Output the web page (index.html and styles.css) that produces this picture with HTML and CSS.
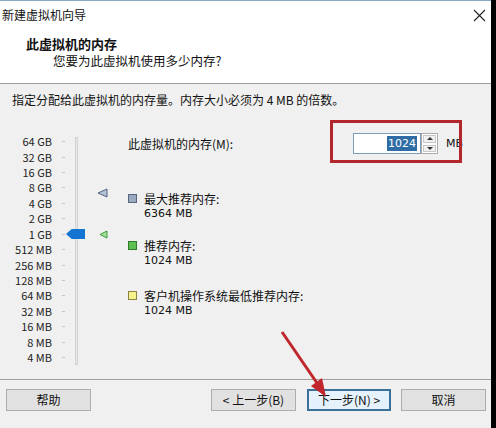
FILE: index.html
```html
<!DOCTYPE html>
<html lang="zh-CN">
<head>
	<meta charset="utf-8">
	<title>新建虚拟机向导</title>
	<link rel="stylesheet" href="styles.css">
</head>
<body>
	<div class="window">
		<div class="titlebar">
			<span>新建虚拟机向导</span>
			<svg class="close" width="13" height="13" viewBox="0 0 13 13"><path d="M1 1 L12 12 M12 1 L1 12" stroke="#222" stroke-width="1.1" fill="none"/></svg>
		</div>

		<div class="header">
			<h1>此虚拟机的内存</h1>
			<p>您要为此虚拟机使用多少内存?</p>
		</div>

		<div class="content">
			<p class="intro">指定分配给此虚拟机的内存量。内存大小必须为 4 MB 的倍数。</p>

			<div class="main">
				<!-- memory slider, log scale -->
				<div class="scale">
					<ul class="labels">
						<li><span>64 GB</span></li>
						<li><span>32 GB</span></li>
						<li><span>16 GB</span></li>
						<li><span>8 GB</span></li>
						<li><span>4 GB</span></li>
						<li><span>2 GB</span></li>
						<li><span>1 GB</span></li>
						<li><span>512 MB</span></li>
						<li><span>256 MB</span></li>
						<li><span>128 MB</span></li>
						<li><span>64 MB</span></li>
						<li><span>32 MB</span></li>
						<li><span>16 MB</span></li>
						<li><span>8 MB</span></li>
						<li><span>4 MB</span></li>
					</ul>
					<div class="track"></div>
					<div class="thumb"></div>
					<svg class="mark mark-max" width="11" height="10" viewBox="0 0 11 10"><path d="M1 5 L10 1 L10 9 Z" fill="#b4c2d4" stroke="#4f6384" stroke-width="1"/></svg>
					<svg class="mark mark-rec" width="9" height="9" viewBox="0 0 9 9"><path d="M1 4.5 L8 1 L8 8 Z" fill="#a6e09a" stroke="#3a9a35" stroke-width="1"/></svg>
				</div>

				<div class="details">
					<div class="mem-row">
						<label>此虚拟机的内存(M):</label>
						<div class="spin-input"><span class="sel">1024</span></div>
						<div class="spinner">
							<span class="up"></span>
							<span class="down"></span>
						</div>
						<span class="unit">MB</span>
					</div>

					<div class="legend legend-max">
						<i class="swatch"></i>
						<div class="legend-text">
							<span>最大推荐内存:</span>
							<span class="size">6364 MB</span>
						</div>
					</div>
					<div class="legend legend-rec">
						<i class="swatch"></i>
						<div class="legend-text">
							<span>推荐内存:</span>
							<span class="size">1024 MB</span>
						</div>
					</div>
					<div class="legend legend-min">
						<i class="swatch"></i>
						<div class="legend-text">
							<span>客户机操作系统最低推荐内存:</span>
							<span class="size">1024 MB</span>
						</div>
					</div>
				</div>
			</div>
		</div>

		<div class="footer">
			<button class="btn">帮助</button>
			<span class="spacer"></span>
			<button class="btn">&lt; 上一步(B)</button>
			<button class="btn btn-default">下一步(N) &gt;</button>
			<button class="btn">取消</button>
		</div>

		<!-- annotation drawn over the screenshot -->
		<div class="callout"></div>
		<svg class="arrow" width="491" height="428" viewBox="0 0 491 428">
			<path d="M282 332 L317 383" stroke="#c0262b" stroke-width="3" fill="none"/>
			<path d="M326 397 L311 386 L322 378 Z" fill="#c0262b"/>
		</svg>
	</div>
</body>
</html>
```

FILE: styles.css
```css
html, body {
	margin: 0;
	padding: 0;
}

body {
	background-color: #000;
	font-family: "Noto Sans CJK SC", "Liberation Sans", sans-serif;
	font-size: 12px;
	color: #111;
}

.window {
	position: relative;
	width: 491px;
	height: 428px;
	background-color: #f0f0f0;
	display: flex;
	flex-direction: column;
	overflow: hidden;
}

.titlebar {
	height: 27px;
	border-top: 1px solid #8aa9c4;
	background-color: #fff;
	display: flex;
	align-items: center;
	justify-content: space-between;
	padding: 0 5px 0 2px;
	font-size: 12px;
	line-height: 16px;
}

.close {
	margin-top: 1px;
}

.header {
	height: 55px;
	background-color: #fff;
	border-bottom: 1px solid #a0a0a0;
	padding-left: 26px;
}

.header h1 {
	margin: 0;
	padding-top: 7px;
	font-size: 13px;
	line-height: 17px;
	font-weight: bold;
}

.header p {
	margin: 0 0 0 27px;
	font-size: 12.5px;
	line-height: 17px;
}

.content {
	flex: 1;
}

.intro {
	margin: 0;
	padding: 8px 0 0 12px;
	line-height: 16px;
}

.main {
	display: flex;
	margin-top: 25px;
}

.scale {
	position: relative;
	width: 128px;
	padding-top: 1px;
}

.labels {
	list-style: none;
	margin: 0;
	padding: 0;
}

.labels li {
	display: flex;
	align-items: center;
	height: 15.43px;
	font-size: 11px;
	color: #222;
}

.labels li span {
	width: 52px;
	text-align: right;
	line-height: 15px;
}

.labels li::after {
	content: "";
	width: 3px;
	height: 1px;
	margin-left: 10px;
	background-color: #c6c6c6;
}

.track {
	position: absolute;
	left: 75px;
	top: 4px;
	width: 1px;
	height: 226px;
	background-color: #e8e8e8;
	border: 1px solid #d2d2d2;
}

.thumb {
	position: absolute;
	left: 66px;
	top: 96px;
	width: 19px;
	height: 10px;
	background-color: #1474d2;
	clip-path: polygon(0 50%, 30% 0, 100% 0, 100% 100%, 30% 100%);
}

.mark {
	position: absolute;
}

.mark-max {
	left: 97px;
	top: 55px;
}

.mark-rec {
	left: 99px;
	top: 97px;
}

.details {
	flex: 1;
}

.mem-row {
	display: flex;
	align-items: center;
	height: 21px;
}

.mem-row label {
	width: 225px;
}

.spin-input {
	box-sizing: border-box;
	width: 68px;
	height: 21px;
	border: 1px solid #7f9db9;
	background-color: #fff;
	display: flex;
	align-items: center;
	justify-content: flex-end;
	padding-right: 3px;
}

.sel {
	font-family: "DejaVu Sans", sans-serif;
	font-size: 11px;
	line-height: 15px;
	background-color: #2f6ca6;
	color: #fff;
	padding: 0 1px;
}

.spinner {
	box-sizing: border-box;
	width: 17px;
	height: 21px;
	border: 1px solid #acacac;
	display: flex;
	flex-direction: column;
	background-color: #fff;
}

.spinner span {
	flex: 1;
	margin: 1px;
	background-color: #f0f0f0;
	border: 1px solid #c8c8c8;
	display: flex;
	align-items: center;
	justify-content: center;
}

.spinner span::after {
	content: "";
	border-left: 3px solid transparent;
	border-right: 3px solid transparent;
}

.spinner .up::after {
	border-bottom: 3px solid #333;
}

.spinner .down::after {
	border-top: 3px solid #333;
}

.unit {
	margin-left: 8px;
	font-family: "DejaVu Sans", sans-serif;
	font-size: 11px;
}

.legend {
	display: flex;
	align-items: flex-start;
}

.legend-max {
	margin-top: 37px;
}

.legend-rec {
	margin-top: 17px;
}

.legend-min {
	margin-top: 20px;
}

.legend-text {
	display: flex;
	flex-direction: column;
	margin-left: 7px;
}

.legend-text span {
	display: block;
	height: 15px;
	line-height: 15px;
}

.legend-text .size {
	font-family: "DejaVu Sans", sans-serif;
	font-size: 11px;
	line-height: 16px;
}

.swatch {
	box-sizing: border-box;
	width: 9px;
	height: 9px;
	margin-top: 3px;
	border: 1px solid #555;
}

.legend-max .swatch {
	background-color: #9aaac0;
	border-color: #56667e;
}

.legend-rec .swatch {
	background-color: #5fbf52;
	border-color: #2f7a2a;
}

.legend-min .swatch {
	background-color: #f6f28c;
	border-color: #8a8440;
}

.footer {
	height: 39px;
	border-top: 1px solid #a0a0a0;
	display: flex;
	align-items: flex-start;
	padding: 9px 5px 0 6px;
}

.spacer {
	flex: 1;
}

.btn {
	box-sizing: border-box;
	width: 85px;
	height: 22px;
	margin: 0;
	padding: 0;
	background-color: #e1e1e1;
	border: 1px solid #adadad;
	font-family: "Noto Sans CJK SC", "Liberation Sans", sans-serif;
	font-size: 12px;
	line-height: 18px;
	color: #111;
}

.btn + .btn {
	margin-left: 11px;
}

.btn-default {
	width: 84px;
	border: 2px solid #3a719b;
	background-color: #e5f1fb;
}

.footer .btn:last-child {
	margin-left: 10px;
}

.callout {
	position: absolute;
	left: 330px;
	top: 120px;
	width: 126px;
	height: 37px;
	border: 3px solid #b3262c;
}

.arrow {
	position: absolute;
	left: 0;
	top: 0;
	pointer-events: none;
}
```
